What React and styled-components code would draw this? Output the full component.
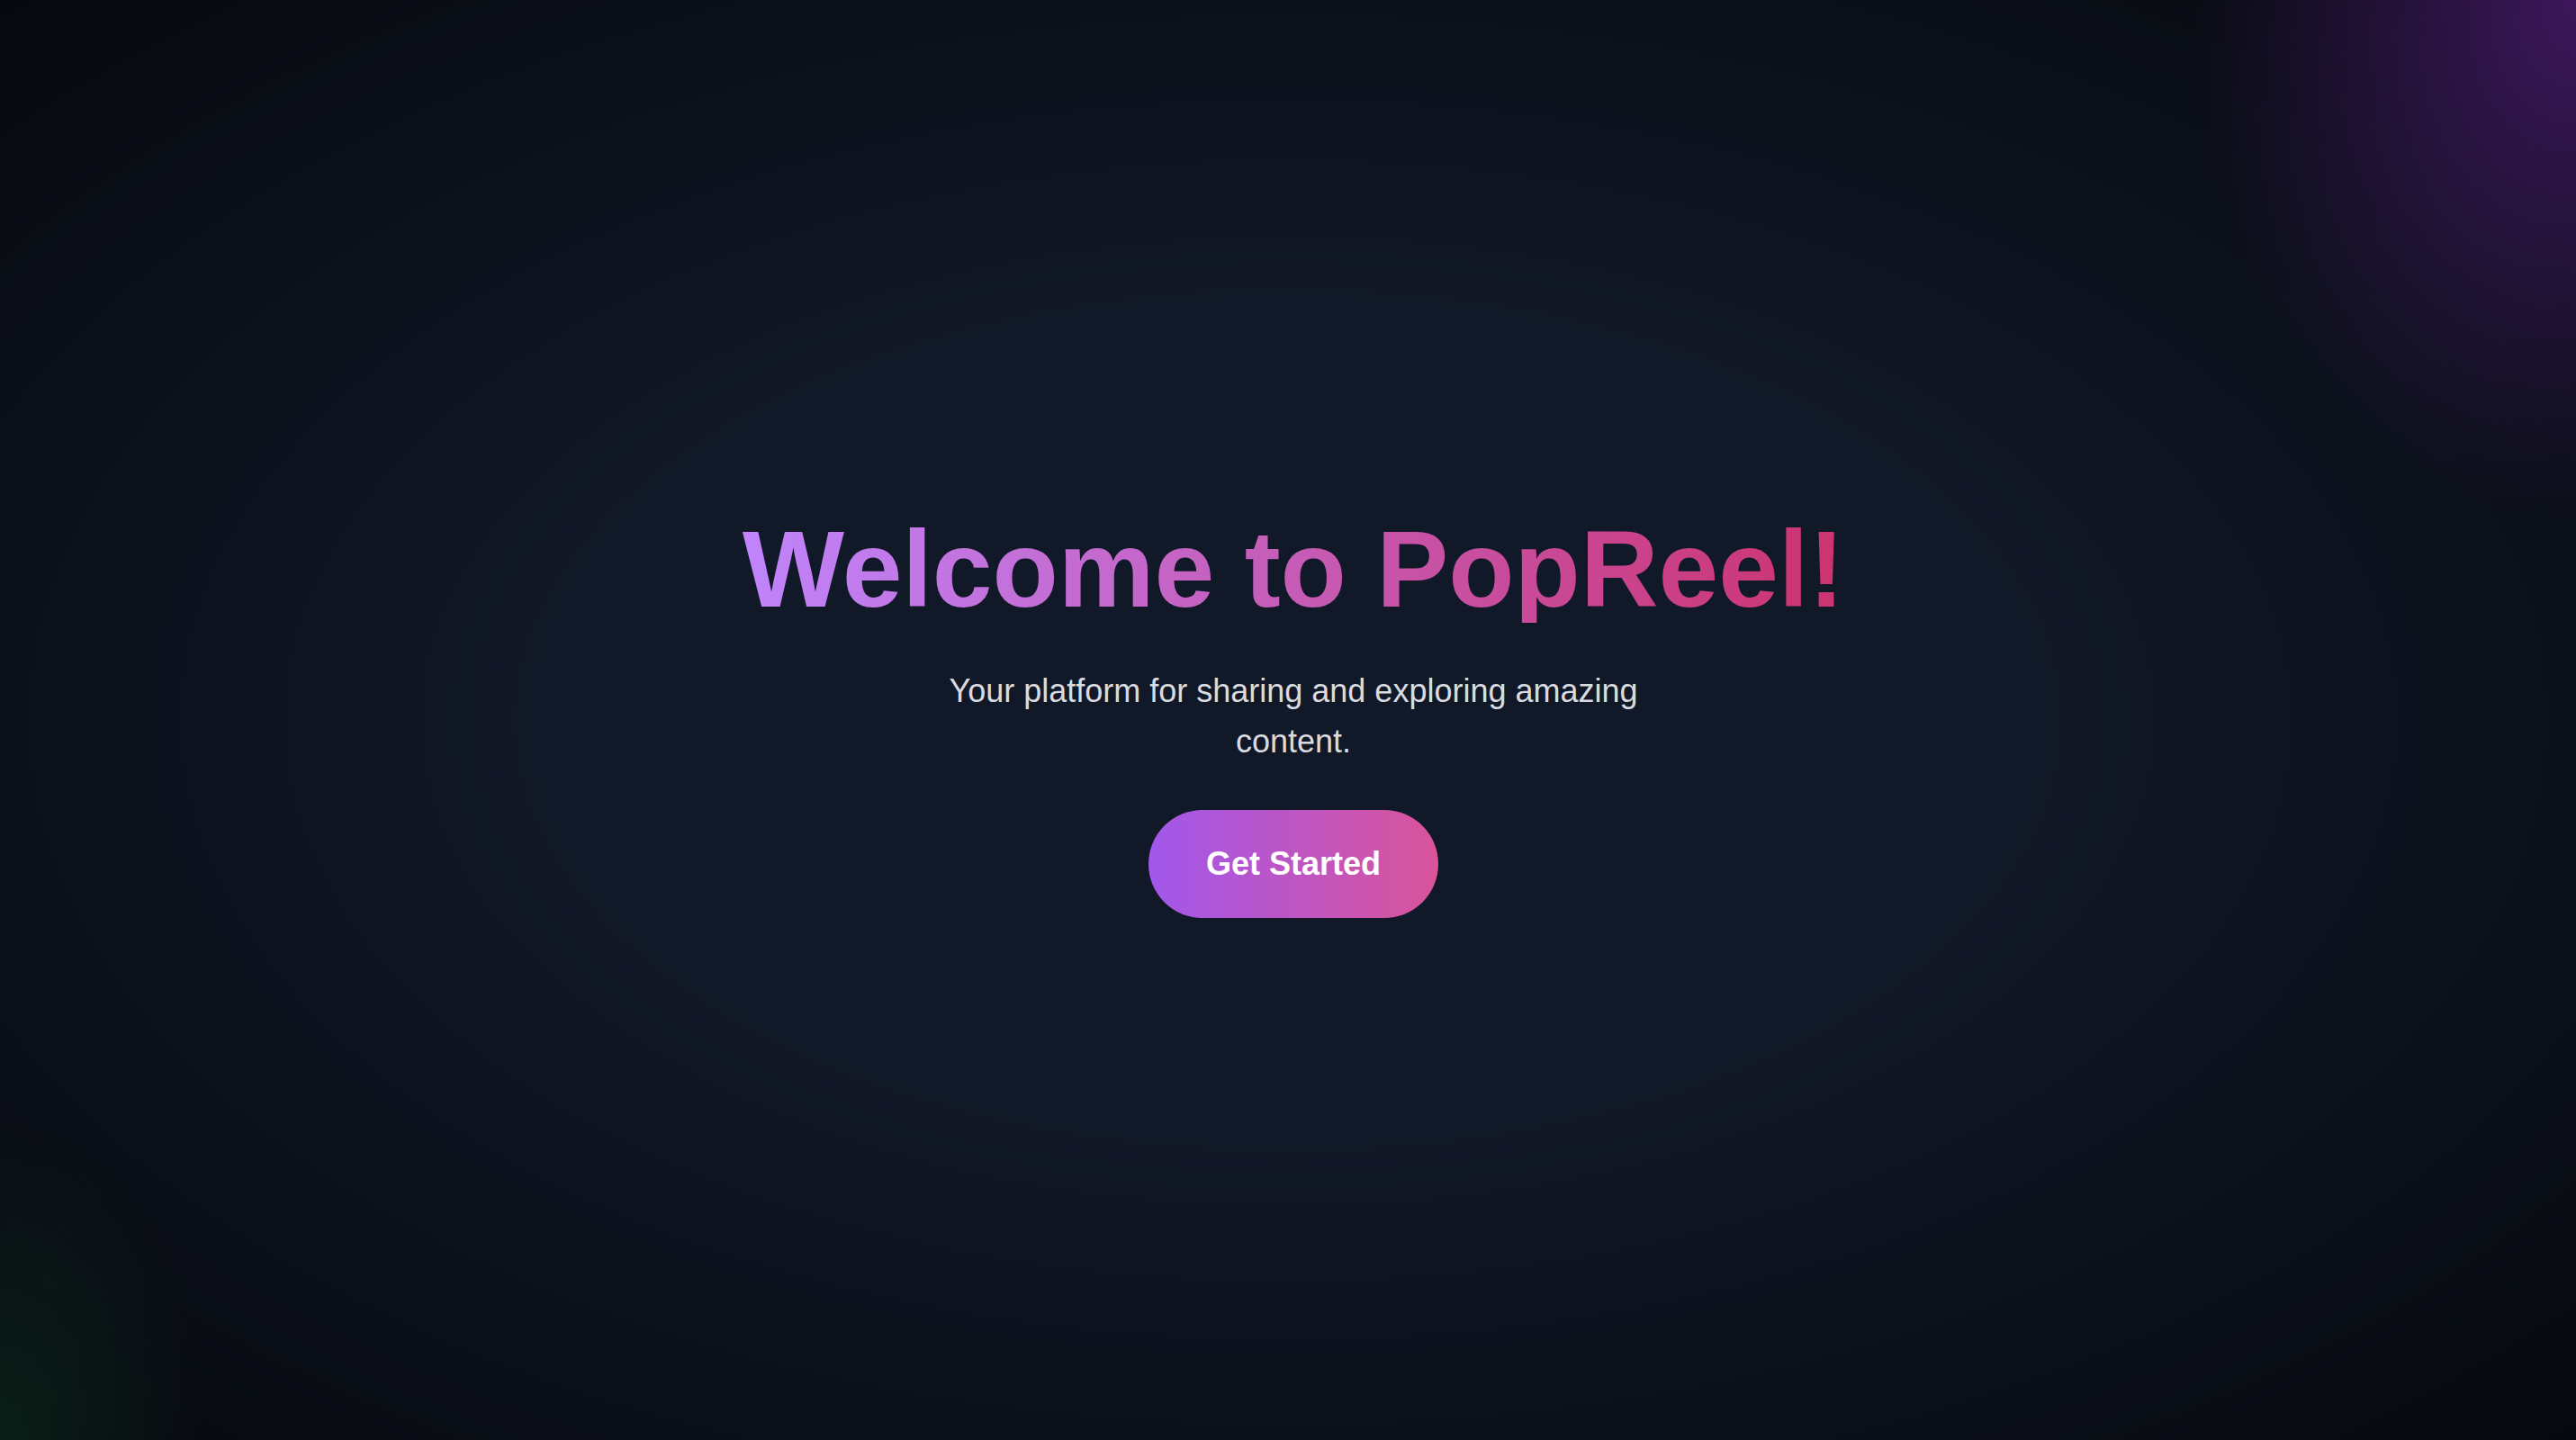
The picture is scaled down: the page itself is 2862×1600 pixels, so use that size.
import React from 'react';
import styled, { createGlobalStyle } from 'styled-components';

const GlobalStyle = createGlobalStyle`
  html, body {
    margin: 0;
    padding: 0;
    background: #0b0e16;
  }
  body {
    font-family: "Liberation Sans", Arial, sans-serif;
  }
  * {
    box-sizing: border-box;
  }
`;

const Page = styled.main`
  min-height: 100vh;
  display: flex;
  flex-direction: column;
  align-items: center;
  justify-content: center;
  padding: 0 20px 8px 32px;
  background:
    radial-gradient(ellipse 15% 36% at 100% 0%, rgba(94, 32, 138, 0.62), rgba(88, 28, 135, 0) 100%),
    radial-gradient(ellipse 8% 22% at 0% 100%, rgba(22, 101, 52, 0.24), rgba(22, 101, 52, 0) 100%),
    radial-gradient(ellipse 72% 72% at 50% 50%, rgba(0, 0, 0, 0) 40%, rgba(0, 0, 0, 0.68) 100%),
    #111827;
`;

const Hero = styled.section`
  display: flex;
  flex-direction: column;
  align-items: center;
  text-align: center;
`;

const Title = styled.h1`
  margin: 0 0 48px;
  font-size: 120px;
  line-height: 1;
  font-weight: 700;
  background: linear-gradient(to right, #c084fc, #cc3370);
  -webkit-background-clip: text;
  background-clip: text;
  color: transparent;
`;

const Subtitle = styled.p`
  margin: 0 0 48px;
  max-width: 896px;
  font-size: 36px;
  line-height: 56px;
  color: #d9dbe1;
`;

const StartButton = styled.button`
  border: none;
  cursor: pointer;
  padding: 32px 64px;
  border-radius: 9999px;
  font-family: inherit;
  font-size: 36px;
  line-height: 56px;
  font-weight: 700;
  color: #ffffff;
  background: linear-gradient(to right, #a257ec, #d9549a);
`;

export default function App() {
  return (
    <>
      <GlobalStyle />
      <Page>
        <Hero>
          <Title>Welcome to PopReel!</Title>
          <Subtitle>Your platform for sharing and exploring amazing content.</Subtitle>
          <StartButton>Get Started</StartButton>
        </Hero>
      </Page>
    </>
  );
}
